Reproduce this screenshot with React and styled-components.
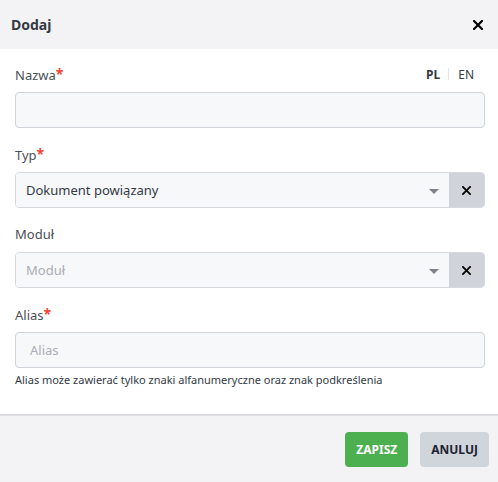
import styled, { createGlobalStyle } from "styled-components";

const Global = createGlobalStyle`
  html, body {
    margin: 0;
    padding: 0;
    background: #fff;
    font-family: "Noto Sans", "Open Sans", sans-serif;
  }
  * { box-sizing: border-box; }
`;

const Modal = styled.div`
  width: 498px;
  height: 482px;
  display: flex;
  flex-direction: column;
  background: #fff;
`;

const Header = styled.div`
  height: 49px;
  background: #f3f3f5;
  display: flex;
  align-items: center;
  justify-content: space-between;
  padding: 0 15px 0 11px;
`;

const Title = styled.div`
  font-size: 14px;
  font-weight: 700;
  color: #333a44;
`;

const CloseBtn = styled.button`
  border: 0;
  background: none;
  padding: 0;
  display: flex;
  cursor: pointer;
`;

const Body = styled.div`
  flex: 1;
  padding: 15px 13px 0 15px;
  display: flex;
  flex-direction: column;
`;

const Field = styled.div`
  display: flex;
  flex-direction: column;
  margin-bottom: ${(p) => p.gap ?? 16}px;
`;

const LabelRow = styled.div`
  display: flex;
  justify-content: space-between;
  align-items: center;
  height: 20px;
  margin-bottom: 8px;
`;

const Label = styled.label`
  font-size: 13px;
  color: #4a4f57;
`;

const Star = styled.span`
  color: #f44336;
  font-weight: 700;
  font-size: 14px;
  position: relative;
  top: -1px;
`;

const Langs = styled.div`
  display: flex;
  align-items: center;
  font-size: 12px;
  color: #333a44;
  margin-right: 11px;
`;

const Lang = styled.span`
  font-weight: ${(p) => (p.active ? 700 : 400)};
`;

const Sep = styled.span`
  width: 1px;
  height: 12px;
  background: #e2e4e8;
  margin: 0 9px 0 8px;
`;

const Input = styled.input`
  height: 36px;
  width: 100%;
  border: 1px solid #cfd3da;
  border-radius: 4px;
  background: #f7f8fa;
  padding: 0 14px;
  font-family: inherit;
  font-size: 13px;
  color: #333;
  outline: none;
  &::placeholder { color: #a9adb3; }
`;

const SelectBox = styled.div`
  height: 36px;
  display: flex;
  border: 1px solid #d5d8dd;
  border-radius: 4px;
  overflow: hidden;
`;

const SelectValue = styled.div`
  flex: 1;
  display: flex;
  align-items: center;
  justify-content: space-between;
  background: #f7f8fa;
  padding: 0 10px;
  font-size: 13px;
  color: ${(p) => (p.placeholder ? "#a9adb3" : "#333a44")};
`;

const Clear = styled.div`
  width: 35px;
  background: #d0d4da;
  display: flex;
  align-items: center;
  justify-content: center;
`;

const Caret = styled.span`
  width: 0;
  height: 0;
  border-left: 5px solid transparent;
  border-right: 5px solid transparent;
  border-top: 5px solid #7d8189;
  margin-top: 2px;
`;

const Help = styled.div`
  font-size: 11px;
  color: #333a44;
  margin-top: 4px;
`;

const Footer = styled.div`
  height: 68px;
  border-top: 2px solid #dcdde0;
  background: #f3f3f5;
  display: flex;
  align-items: center;
  justify-content: flex-end;
  gap: 12px;
  padding: 0 9px 0 0;
`;

const Btn = styled.button`
  height: 35px;
  padding: 0 11px;
  border: 0;
  border-radius: 4px;
  background: ${(p) => (p.primary ? "#4caf50" : "#d0d4db")};
  color: ${(p) => (p.primary ? "#fff" : "#1d2330")};
  font-family: inherit;
  font-size: 12px;
  font-weight: 700;
  cursor: pointer;
`;

const X = ({ size = 10, w = 2.4 }) => (
  <svg width={size} height={size} viewBox="0 0 10 10">
    <path d="M1 1L9 9M9 1L1 9" stroke="#000" strokeWidth={w} strokeLinecap="square" />
  </svg>
);

function App() {
  return (
    <Modal>
      <Global />
      <Header>
        <Title>Dodaj</Title>
        <CloseBtn>
          <X size={10} w={2.2} />
        </CloseBtn>
      </Header>
      <Body>
        <Field>
          <LabelRow>
            <Label>
              Nazwa<Star>*</Star>
            </Label>
            <Langs>
              <Lang active>PL</Lang>
              <Sep />
              <Lang>EN</Lang>
            </Langs>
          </LabelRow>
          <Input />
        </Field>
        <Field>
          <LabelRow>
            <Label>
              Typ<Star>*</Star>
            </Label>
          </LabelRow>
          <SelectBox>
            <SelectValue>
              Dokument powiązany
              <Caret />
            </SelectValue>
            <Clear>
              <X size={9} w={2} />
            </Clear>
          </SelectBox>
        </Field>
        <Field>
          <LabelRow>
            <Label>Moduł</Label>
          </LabelRow>
          <SelectBox>
            <SelectValue placeholder>
              Moduł
              <Caret />
            </SelectValue>
            <Clear>
              <X size={9} w={2} />
            </Clear>
          </SelectBox>
        </Field>
        <Field gap={0}>
          <LabelRow>
            <Label>
              Alias<Star>*</Star>
            </Label>
          </LabelRow>
          <Input placeholder="Alias" />
          <Help>Alias może zawierać tylko znaki alfanumeryczne oraz znak podkreślenia</Help>
        </Field>
      </Body>
      <Footer>
        <Btn primary>ZAPISZ</Btn>
        <Btn>ANULUJ</Btn>
      </Footer>
    </Modal>
  );
}

export default App;
